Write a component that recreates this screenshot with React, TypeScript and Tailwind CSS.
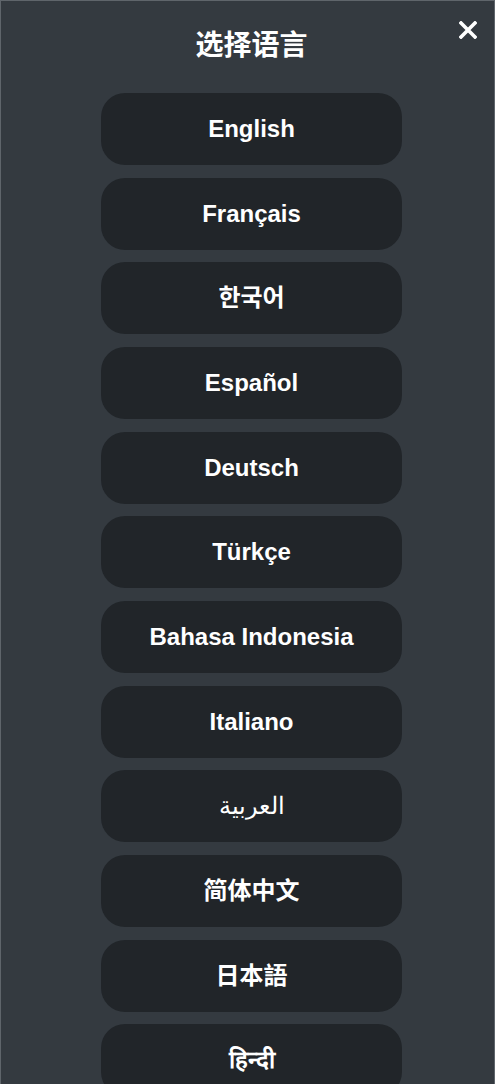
import React from 'react';

const languages = [
  'English',
  'Français',
  '한국어',
  'Español',
  'Deutsch',
  'Türkçe',
  'Bahasa Indonesia',
  'Italiano',
  'العربية',
  '简体中文',
  '日本語',
  'हिन्दी',
];

const CloseIcon: React.FC = () => (
  <svg width="18" height="18" viewBox="0 0 18 18" fill="none">
    <path d="M2 2L16 16M16 2L2 16" stroke="white" strokeWidth="3.6" strokeLinecap="square" />
  </svg>
);

const App: React.FC = () => {
  return (
    <div
      className="h-[1084px] overflow-hidden bg-[#343a40] border border-b-0 border-[#5f656b] relative"
      style={{ fontFamily: '"Liberation Sans", Arial, "Noto Sans CJK SC", sans-serif' }}
    >
      <button className="absolute right-[17px] top-[20px]">
        <CloseIcon />
      </button>

      <div className="flex flex-col items-center pl-2">
        <h1 className="mt-[27px] text-[28px] leading-[36px] font-bold text-white">选择语言</h1>

        <div className="mt-[29px] flex flex-col gap-[12.67px]">
          {languages.map(lang => (
            <button
              key={lang}
              className={`w-[301px] h-[72px] rounded-3xl bg-[#212529] text-white text-[24px] flex items-center justify-center ${
                lang === 'العربية' ? 'font-normal text-[22px]' : 'font-bold'
              }`}
            >
              {lang}
            </button>
          ))}
        </div>
      </div>
    </div>
  );
};

export default App;
